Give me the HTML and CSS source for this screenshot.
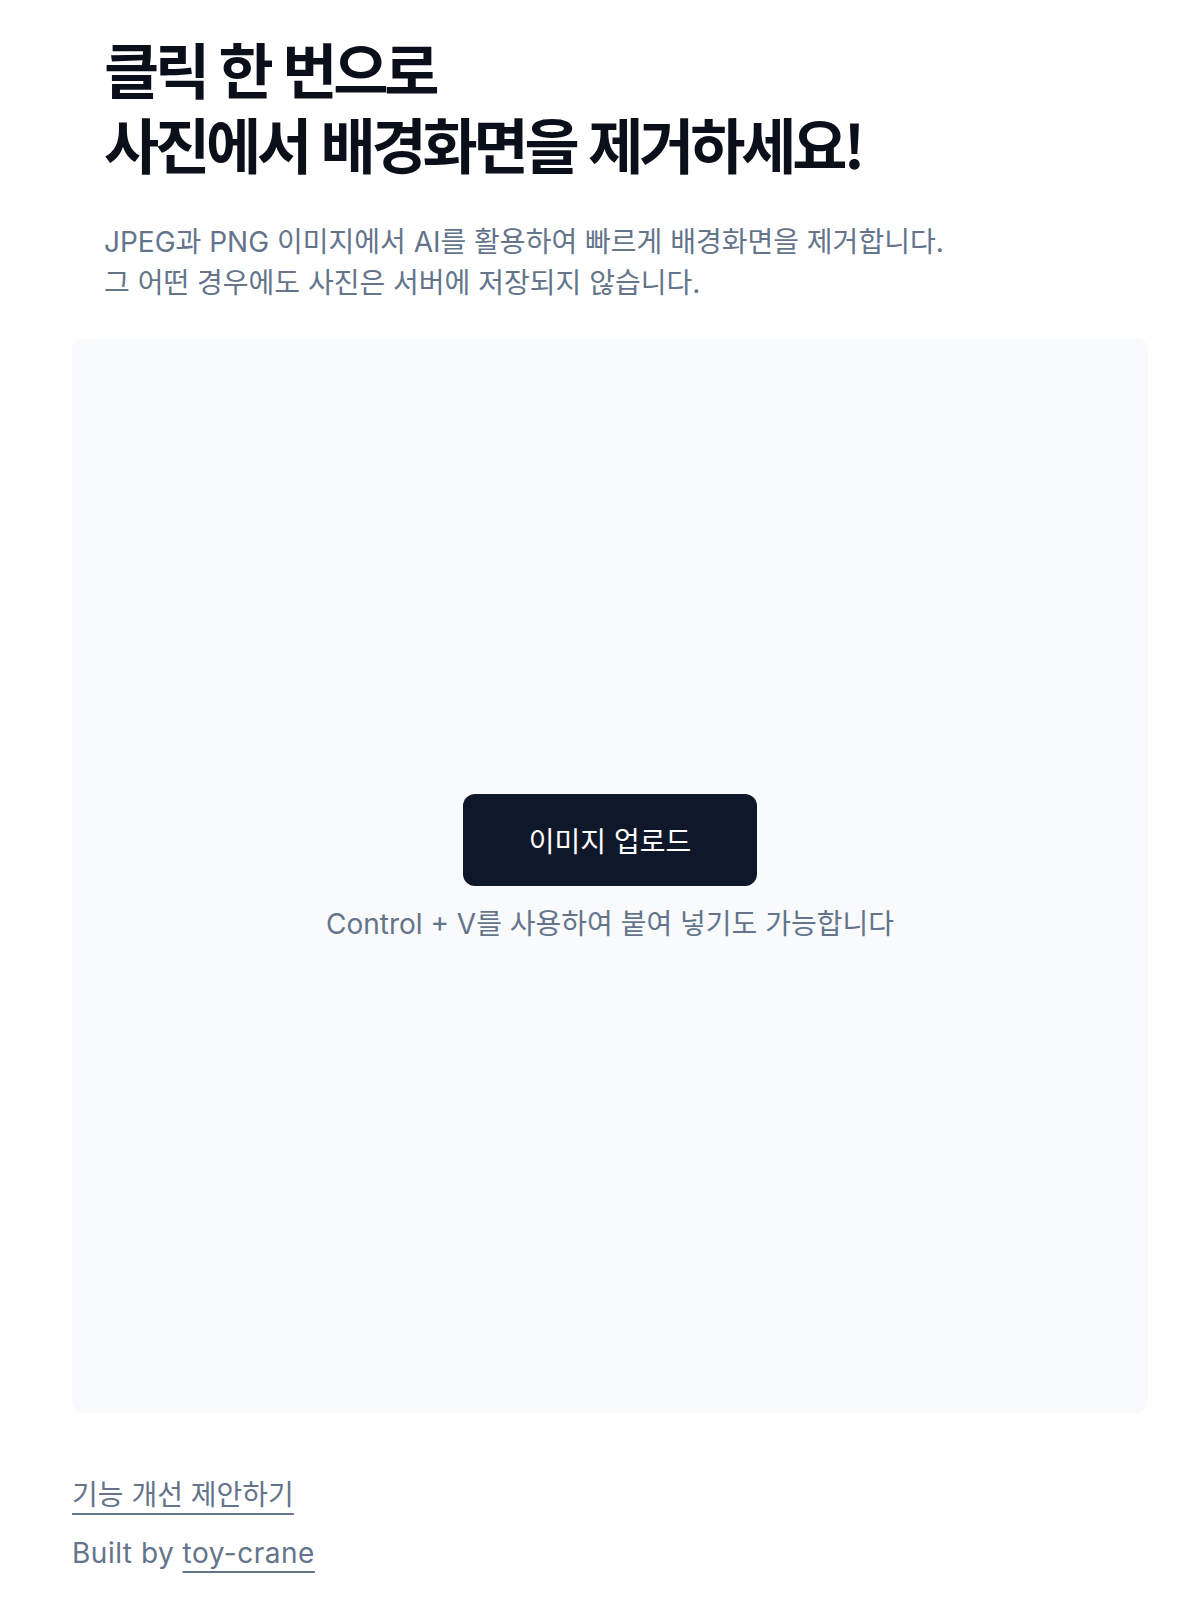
FILE: index.html
```html
<!DOCTYPE html>
<html lang="ko">
<head>
<meta charset="utf-8">
<title>배경화면 제거</title>
<link rel="stylesheet" href="styles.css">
</head>
<body>
<main class="page">
  <header class="intro">
    <h1 class="title"><span class="title-line">클릭 한 번으로</span><span class="title-line">사진에서 배경화면을 제거하세요!</span></h1>
    <p class="desc">JPEG과 PNG 이미지에서 AI를 활용하여 빠르게 배경화면을 제거합니다.<br>그 어떤 경우에도 사진은 서버에 저장되지 않습니다.</p>
  </header>
  <section class="dropzone">
    <button class="upload" type="button">이미지 업로드</button>
    <p class="hint">Control + V를 사용하여 붙여 넣기도 가능합니다</p>
  </section>
  <footer class="footer">
    <a class="link" href="#">기능 개선 제안하기</a>
    <p class="credit">Built by <a class="link" href="#">toy-crane</a></p>
  </footer>
</main>
</body>
</html>
```
FILE: styles.css
```css
html, body {
  margin: 0;
  padding: 0;
  background: #ffffff;
}
body {
  font-family: "Inter", "Noto Sans CJK KR", sans-serif;
  color: #64748b;
}
.page {
  padding: 30px 52px 40px 72px;
  display: flex;
  flex-direction: column;
}
.intro {
  padding-left: 32px;
}
.title {
  margin: 0;
  font-family: "Noto Sans CJK KR", sans-serif;
  font-weight: 700;
  font-size: 60px;
  line-height: 75px;
  letter-spacing: -4.2px;
  color: #0b0f1a;
}
.title-line {
  display: block;
  height: 75px;
  overflow: visible;
}
.desc {
  margin: 42px 0 0;
  font-size: 28px;
  line-height: 41px;
  color: #64748b;
}
.dropzone {
  margin-top: 34px;
  width: 1076px;
  height: 1075px;
  box-sizing: border-box;
  background: #f8fafc;
  border-radius: 12px;
  display: flex;
  flex-direction: column;
  align-items: center;
  justify-content: center;
  gap: 18px;
  padding-bottom: 13px;
}
.upload {
  width: 294px;
  height: 92px;
  border: none;
  border-radius: 12px;
  background: #0f172a;
  color: #ffffff;
  font-family: "Inter", "Noto Sans CJK KR", sans-serif;
  font-size: 28px;
  cursor: pointer;
}
.hint {
  margin: 0;
  font-size: 28px;
  line-height: 40px;
  color: #64748b;
}
.footer {
  margin-top: 62px;
  display: flex;
  flex-direction: column;
  align-items: flex-start;
  gap: 18px;
  font-size: 28px;
  line-height: 40px;
}
.credit {
  margin: 0;
  letter-spacing: 0.5px;
}
.link {
  color: #64748b;
  text-decoration: underline;
  text-decoration-thickness: 2px;
  text-underline-offset: 8px;
}
```
